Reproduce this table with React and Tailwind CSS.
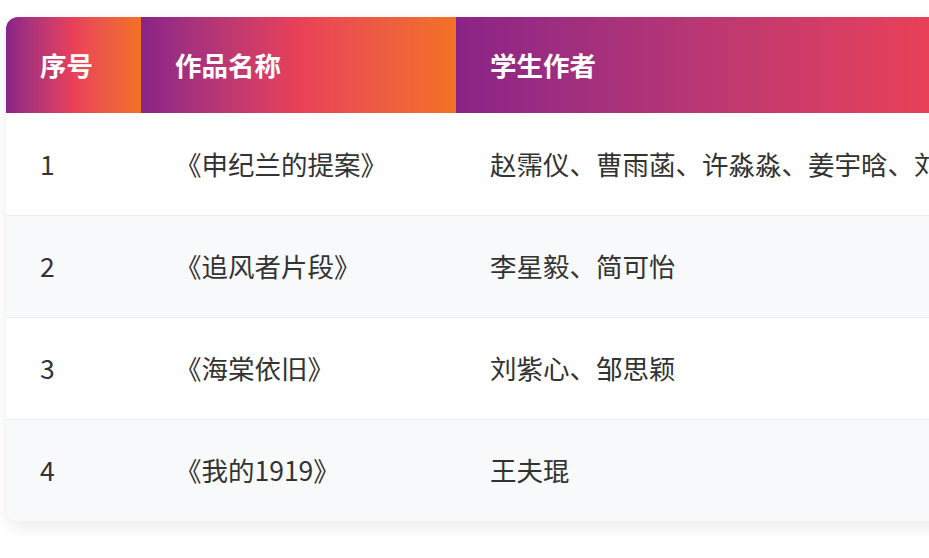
const works = [
  { id: 1, title: "《申纪兰的提案》", authors: "赵霈仪、曹雨菡、许淼淼、姜宇晗、刘" },
  { id: 2, title: "《追风者片段》", authors: "李星毅、简可怡" },
  { id: 3, title: "《海棠依旧》", authors: "刘紫心、邹思颖" },
  { id: 4, title: "《我的1919》", authors: "王夫琨" },
];

const headCell =
  "h-[96px] px-[34px] text-left align-middle font-bold text-white bg-gradient-to-r from-[#8a2387] via-[#e94057] to-[#f27121]";

export default function App() {
  return (
    <div
      className="min-h-screen w-full overflow-hidden bg-white pt-[17px] pl-[6px]"
      style={{ fontFamily: '"Noto Sans CJK SC", "Noto Sans", sans-serif' }}
    >
      <div className="w-[1396px] overflow-hidden rounded-xl bg-white shadow-[0_6px_16px_rgba(0,0,0,0.08)]">
        <table className="w-full table-fixed border-collapse text-[26.5px]">
          <colgroup>
            <col className="w-[135px]" />
            <col className="w-[315px]" />
            <col />
          </colgroup>
          <thead>
            <tr>
              <th className={headCell}>序号</th>
              <th className={headCell}>作品名称</th>
              <th className={headCell}>学生作者</th>
            </tr>
          </thead>
          <tbody className="text-[#333]">
            {works.map((w, i) => (
              <tr
                key={w.id}
                className={`h-[102px] ${i % 2 ? "bg-[#f8f9fb]" : "bg-white"} ${
                  i < works.length - 1 ? "border-b border-[#e9ecef]" : ""
                }`}
              >
                <td className="px-[34px] align-middle">{w.id}</td>
                <td className="px-[34px] align-middle whitespace-nowrap">{w.title}</td>
                <td className="px-[34px] align-middle whitespace-nowrap">{w.authors}</td>
              </tr>
            ))}
          </tbody>
        </table>
      </div>
    </div>
  );
}
